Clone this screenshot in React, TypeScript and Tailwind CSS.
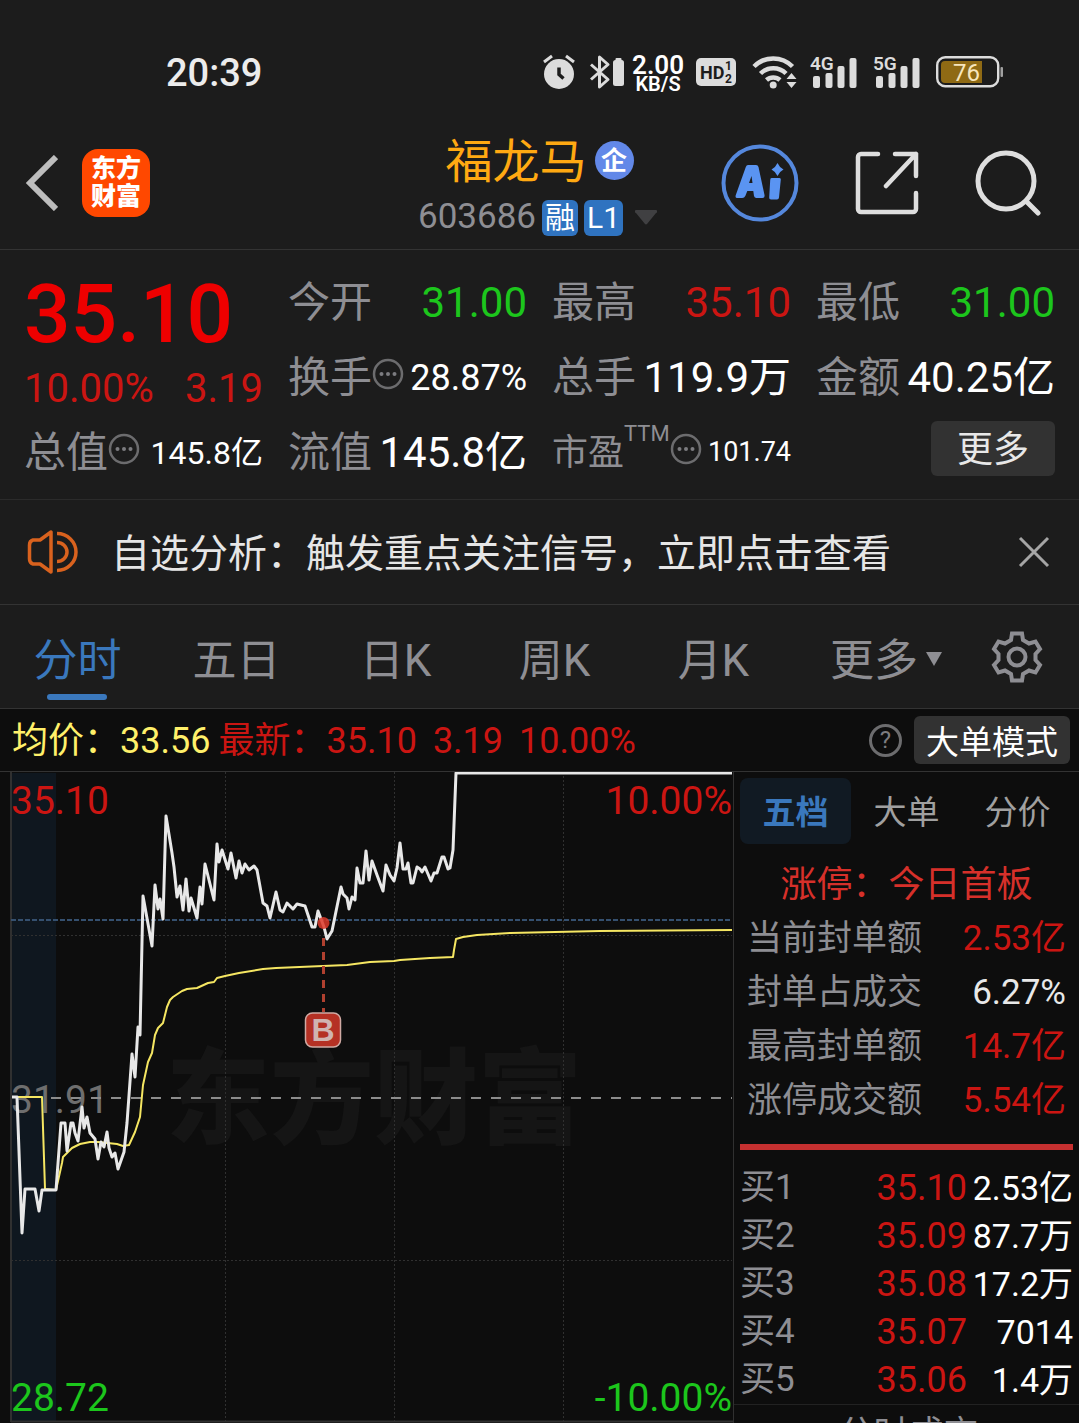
import type { ReactNode } from "react";

type QuoteCell = {
  label: string;
  value: string;
  valueClass: string;
  hint?: boolean;
};

const gray = "text-[#8e8e93]";

const quoteRows: QuoteCell[][] = [
  [
    { label: "今开", value: "31.00", valueClass: "text-[42px] text-[#1cc61c]" },
    { label: "最高", value: "35.10", valueClass: "text-[42px] text-[#cb1512]" },
    { label: "最低", value: "31.00", valueClass: "text-[42px] text-[#1cc61c]" },
  ],
  [
    { label: "换手", value: "28.87%", valueClass: "text-[36px] text-white", hint: true },
    { label: "总手", value: "119.9万", valueClass: "text-[42px] text-white" },
    { label: "金额", value: "40.25亿", valueClass: "text-[42px] text-white" },
  ],
];

const periods = ["分时", "五日", "日K", "周K", "月K"];

const limitStats = [
  { label: "当前封单额", value: "2.53亿", color: "text-[#cb1512]" },
  { label: "封单占成交", value: "6.27%", color: "text-[#e8e8e8]" },
  { label: "最高封单额", value: "14.7亿", color: "text-[#cb1512]" },
  { label: "涨停成交额", value: "5.54亿", color: "text-[#cb1512]" },
];

const bids = [
  { level: "买1", price: "35.10", volume: "2.53亿" },
  { level: "买2", price: "35.09", volume: "87.7万" },
  { level: "买3", price: "35.08", volume: "17.2万" },
  { level: "买4", price: "35.07", volume: "7014" },
  { level: "买5", price: "35.06", volume: "1.4万" },
];

const pricePoints =
  "12,325 17,325 22,461 25,417 35,417 39,439 42,418 56,418 61,351 65,351 67,379 71,351 73,351 75,361 78,369 82,335 84,356 87,345 90,361 95,367 98,387 101,370 104,375 107,360 109,376 112,385 115,381 118,397 124,380 127,351 132,282 135,305 138,255 140,263 143,124 152,174 155,113 158,137 160,127 163,147 166,44 172,81 174,95 177,125 180,114 183,138 186,107 189,139 191,126 197,146 200,115 202,132 205,92 214,128 217,72 219,90 222,78 228,97 231,81 236,106 239,89 242,101 245,92 249,98 254,94 257,98 263,131 267,134 270,146 276,120 280,138 283,140 287,131 293,137 297,132 305,134 312,155 315,155 318,139 324,155 327,167 332,159 341,115 343,122 347,126 349,137 352,125 355,128 357,96 360,111 363,111 366,79 369,108 372,89 377,103 383,119 386,93 390,103 394,109 397,96 400,71 403,97 406,97 408,91 411,111 413,111 417,95 420,97 422,100 425,95 431,109 434,101 437,101 442,85 444,85 448,97 450,96 453,78 456,1 732,1";

const averagePoints =
  "17,325 42,325 45,417 56,418 62,391 63,385 72,376 80,372 90,370 98,370 117,372 123,374 129,373 135,360 140,345 143,313 148,290 152,281 155,263 158,256 163,251 167,235 170,228 173,225 182,219 187,217 197,216 208,211 214,210 217,206 225,204 239,201 263,197 276,196 323,194 347,193 370,190 394,189 400,188 430,186 453,185 454,178 456,167 463,165 477,163 510,161 600,159 732,158";

function AlarmIcon() {
  return (
    <svg viewBox="0 0 34 36" className="h-9 w-[34px]" fill="none">
      <circle cx="17" cy="20" r="15" fill="#dcdcdc" />
      <path d="M2 8 10 2M32 8l-8-6" stroke="#dcdcdc" strokeWidth="3" />
      <path d="M17 13.500v7l4.500 4" stroke="#1c1c1c" strokeWidth="3.500" />
    </svg>
  );
}

function BluetoothIcon() {
  return (
    <svg viewBox="0 0 36 36" className="h-9 w-9" fill="none">
      <path d="m3 10.500 17 15-8.500 7.500V3l8.500 7.500-17 15" stroke="#dcdcdc" strokeWidth="3" strokeLinejoin="round" />
      <rect x="25" y="6" width="11" height="26" rx="2.500" fill="#dcdcdc" />
      <rect x="27.500" y="4" width="6" height="3" rx="1" fill="#dcdcdc" />
    </svg>
  );
}

function HdIcon() {
  return (
    <svg viewBox="0 0 40 28" className="h-7 w-10" fontWeight="700" fill="#1c1c1c">
      <rect width="40" height="28" rx="5" fill="#dcdcdc" />
      <text x="4" y="21" fontSize="18">HD</text>
      <text x="29" y="12" fontSize="12">1</text>
      <text x="29" y="25" fontSize="12">2</text>
    </svg>
  );
}

function WifiIcon() {
  return (
    <svg viewBox="0 0 46 36" className="h-9 w-[46px]" fill="none">
      <path d="M2 12.500a27 27 0 0 1 38.500 0M8.500 19.500a18 18 0 0 1 25.500 0M14.500 26a10 10 0 0 1 13.500 0" stroke="#dcdcdc" strokeWidth="4.500" />
      <circle cx="21.200" cy="31" r="3.500" fill="#dcdcdc" />
      <path d="m34.500 25 5-6 5 6zM34.500 28l5 6 5-6z" fill="#dcdcdc" />
    </svg>
  );
}

function SignalIcon({ label }: { label: string }) {
  return (
    <svg viewBox="0 0 47 38" className="mb-1 h-[38px] w-[47px]" fill="#dcdcdc">
      <text x="0" y="19" fontSize="19" fontWeight="600">{label}</text>
      <rect x="3" y="25" width="7" height="12" rx="2" />
      <rect x="15.500" y="22" width="7" height="15" rx="2" />
      <rect x="27.500" y="15" width="7" height="22" rx="2" />
      <rect x="39.500" y="7" width="7" height="30" rx="2" />
    </svg>
  );
}

function BatteryIcon() {
  return (
    <svg viewBox="0 0 67 32" className="h-8 w-[67px]" fill="none">
      <rect x="1.200" y="1.200" width="61" height="29" rx="8" stroke="#dcdcdc" strokeWidth="2.400" />
      <path d="M9 5h37v22H9a4 4 0 0 1-4-4V9a4 4 0 0 1 4-4Z" fill="#8f6a14" />
      <rect x="64.500" y="11" width="2.500" height="10" rx="1" fill="#a0a0a0" />
      <text x="17" y="25" fontSize="24" fill="#f7e6bd">76</text>
    </svg>
  );
}

function StatusBar() {
  return (
    <div className="flex h-[116px] items-center justify-between pt-7 pr-[76px] pl-[166px]">
      <span className="pt-0.5 text-[38px] font-medium text-[#ececec]">20:39</span>
      <div className="flex items-center">
        <AlarmIcon />
        <div className="ml-3">
          <BluetoothIcon />
        </div>
        <div className="ml-2 pt-1 text-center font-semibold text-white">
          <div className="text-[26px] leading-5">2.00</div>
          <div className="text-[20px] leading-[18px]">KB/S</div>
        </div>
        <div className="ml-3">
          <HdIcon />
        </div>
        <div className="ml-4">
          <WifiIcon />
        </div>
        <div className="ml-3">
          <SignalIcon label="4G" />
        </div>
        <div className="ml-4">
          <SignalIcon label="5G" />
        </div>
        <div className="ml-4">
          <BatteryIcon />
        </div>
      </div>
    </div>
  );
}

function Header() {
  return (
    <header className="grid h-[134px] grid-cols-[1fr_auto_1fr] items-center border-b border-[#333333] px-6">
      <div className="flex items-center gap-6">
        <button aria-label="返回">
          <svg viewBox="0 0 34 56" className="h-14 w-[34px]" fill="none" stroke="#bdbdbd" strokeWidth="6">
            <path d="M32 2 6 28l26 26" />
          </svg>
        </button>
        <div className="flex h-[68px] w-[68px] flex-col items-center justify-center rounded-2xl bg-[#ff4800] text-[25px] leading-7 font-black text-white">
          <span>东方</span>
          <span>财富</span>
        </div>
      </div>
      <div className="flex flex-col items-center pt-2">
        <div className="flex items-center gap-2">
          <h1 className="pt-0.5 text-[47px] leading-[60px] text-[#ffa912]">福龙马</h1>
          <span className="flex h-[39px] w-[39px] items-center justify-center rounded-full bg-[#6288e8] text-[26px] leading-none font-bold text-white">
            企
          </span>
        </div>
        <div className="flex h-[52px] items-center gap-1.5 pr-1">
          <span className="text-[35px] text-[#8e8e93]">603686</span>
          <span className="flex h-9 w-9 items-center justify-center rounded-md bg-[#2f73c0] text-[30px] leading-none text-white">融</span>
          <span className="flex h-9 w-[39px] items-center justify-center rounded-md bg-[#2f73c0] text-[30px] leading-none text-white">L1</span>
          <svg viewBox="0 0 22 15" className="ml-1.5 h-[15px] w-[22px]" fill="#404042">
            <path d="M2 0h18a1.500 1.500 0 0 1 1 3l-9 11a1.500 1.500 0 0 1-2 0L1 3a1.500 1.500 0 0 1 1-3Z" />
          </svg>
        </div>
      </div>
      <div className="flex items-center justify-end gap-[56px] pr-3.5">
        <button aria-label="Ai">
          <svg viewBox="0 0 78 78" className="h-[78px] w-[78px]" fill="none">
            <circle cx="39" cy="39" r="36.500" stroke="#5588dd" strokeWidth="4" />
            <path fillRule="evenodd" d="M27 21h8q2 0 2.500 2l6 28q.5 3-2 3h-6q-2 0-2.500-2l-.7-5h-6l-2 5q-1 2-3 2h-5q-2.500 0-1.500-3l10-28q.7-2 2.200-2Zm3.500 11-2.500 7h3.500Z" fill="#5a94f2" />
            <path d="M50.500 34h8q1.500 0 1.300 1.500l-1.800 18q-.2 2-2 2h-6q-2 0-1.800-2l1-17.500q.1-2 1.300-2ZM56.500 19q2 4.500 6 6.500-4 2-6 6.500-2-4.500-6-6.500 4-2 6-6.500Z" fill="#5a94f2" />
          </svg>
        </button>
        <button aria-label="分享">
          <svg viewBox="0 0 64 64" className="h-16 w-16" fill="none" stroke="#dedede" strokeWidth="4.500" strokeLinecap="round" strokeLinejoin="round">
            <path d="M23 3H6a3 3 0 0 0-3 3v52a3 3 0 0 0 3 3h52a3 3 0 0 0 3-3V42M40 3h21v22M61 3 31 35" />
          </svg>
        </button>
        <button aria-label="搜索">
          <svg viewBox="0 0 66 66" className="h-[66px] w-[66px]" fill="none" stroke="#dedede" strokeWidth="5" strokeLinecap="round">
            <circle cx="31" cy="31" r="28" />
            <path d="m51 51 12 12" />
          </svg>
        </button>
      </div>
    </header>
  );
}

function HintIcon() {
  return (
    <svg viewBox="0 0 32 32" className="mb-2 h-8 w-8 shrink-0" fill="none">
      <circle cx="16" cy="16" r="14" stroke="#6c6c6e" strokeWidth="2.500" />
      <g fill="#7c7c80">
        <circle cx="9.500" cy="16" r="2" />
        <circle cx="16" cy="16" r="2" />
        <circle cx="22.500" cy="16" r="2" />
      </g>
    </svg>
  );
}

function Cell({ children }: { children: ReactNode }) {
  return <div className="flex h-[75px] items-center justify-between whitespace-nowrap">{children}</div>;
}

function QuoteValue({ cell }: { cell: QuoteCell }) {
  return (
    <Cell>
      <span className={`flex items-center text-[42px] ${gray}`}>
        {cell.label}
        {cell.hint && <HintIcon />}
      </span>
      <span className={cell.valueClass}>{cell.value}</span>
    </Cell>
  );
}

function QuotePanel() {
  return (
    <section className="grid grid-cols-4 gap-x-[25px] border-b border-[#2b2b2b] px-6 pt-[15px] pb-[9px]">
      <div className="row-span-2">
        <div className="text-[82px] leading-[98px] font-medium text-[#ee0000]">35.10</div>
        <div className="flex justify-between text-[40px] leading-[52px] text-[#cb1512]">
          <span>10.00%</span>
          <span>3.19</span>
        </div>
      </div>
      {quoteRows.flat().map((cell) => (
        <QuoteValue key={cell.label} cell={cell} />
      ))}
      <QuoteValue cell={{ label: "总值", value: "145.8亿", valueClass: "text-[32px] text-white", hint: true }} />
      <QuoteValue cell={{ label: "流值", value: "145.8亿", valueClass: "text-[42px] text-white" }} />
      <Cell>
        <span className={`flex items-center text-[36px] ${gray}`}>
          市盈
          <span className="self-start text-[22px] leading-4">TTM</span>
          <HintIcon />
        </span>
        <span className="text-[27px] text-white">101.74</span>
      </Cell>
      <div className="flex h-[67px] items-center justify-end">
        <button className="h-[55px] w-[124px] rounded-md bg-[#323232] pt-0.5 text-[36px] leading-none text-[#e8e8e8]">更多</button>
      </div>
    </section>
  );
}

function Notice() {
  return (
    <div className="flex h-[105px] items-center border-b border-[#333333] pr-[29px] pl-[27px]">
      <svg viewBox="0 0 52 44" className="h-11 w-[52px]" fill="none" stroke="#d9621e" strokeWidth="3.500" strokeLinejoin="round">
        <path d="M24 2v40L13 34H6q-3.500-1-3.500-5V15q0-4 3.500-5h7Z" />
        <path d="M30 3.500a19 18.500 0 0 1 0 37M30 12.500a10 9.500 0 0 1 0 19" />
      </svg>
      <p className="ml-8 flex-1 pt-1 text-[39px] whitespace-nowrap text-[#e6e6e6]">自选分析：触发重点关注信号，立即点击查看</p>
      <button aria-label="关闭">
        <svg viewBox="0 0 32 32" className="h-8 w-8" stroke="#a5a5a5" strokeWidth="3">
          <path d="m2 2 28 28M30 2 2 30" />
        </svg>
      </button>
    </div>
  );
}

function PeriodTabs() {
  return (
    <nav className={`flex h-[104px] border-b border-[#333333] pr-[34px] text-[44px] ${gray}`}>
      {periods.map((period, i) => (
        <button key={period} className={`flex-[160] pt-2 pr-1 ${i === 0 ? "text-[#3a78bd]" : ""}`}>
          <span className="relative inline-block">
            {period}
            {i === 0 && <span className="absolute -bottom-1.5 left-1/2 h-1.5 w-[60px] -translate-x-1/2 rounded-full bg-[#3a78bd]" />}
          </span>
        </button>
      ))}
      <button className="flex flex-[188] items-center justify-center gap-2 pt-2 pr-3">
        更多
        <svg viewBox="0 0 16 14" className="mb-1 h-3.5 w-4" fill="#8e8e93">
          <path d="M0 0h16L8 14Z" />
        </svg>
      </button>
      <button aria-label="设置" className="flex w-[56px] items-center justify-center">
        <svg viewBox="0 0 52 52" className="h-[52px] w-[52px]" fill="none" stroke="#8e8e93" strokeWidth="4">
          <path d="M21 2.500h10l1 6.500 6 3.500 6.500-2 4.500 7.500-4.500 5v6l4.500 5-4.500 7.500-6.500-2-6 3.500-1 6.500H21l-1-6.500-6-3.500-6.500 2L3 34l4.500-5v-6L3 18l4.500-7.500 6.500 2L20 9Z" />
          <circle cx="26" cy="26" r="8.500" />
        </svg>
      </button>
    </nav>
  );
}

function ChartInfo() {
  return (
    <div className="flex h-[63px] items-center border-b border-[#333333] pr-[9px] pl-3 text-[36px] whitespace-nowrap text-[#cb1512]">
      <span className="pt-0.5 text-[#fff06a]">均价：33.56</span>
      <span className="ml-2 pt-0.5">最新：35.10</span>
      <span className="ml-4 pt-0.5">3.19</span>
      <span className="ml-4 pt-0.5">10.00%</span>
      <button aria-label="帮助" className="ml-auto flex h-[33px] w-[33px] items-center justify-center rounded-full border-[3px] border-[#6c6c6e] text-[24px] leading-none text-[#7c7c80]">
        ?
      </button>
      <button className="ml-3 h-12 w-[156px] rounded-md bg-[#323232] pt-1 text-[33px] leading-none text-white">大单模式</button>
    </div>
  );
}

function MinuteChart() {
  return (
    <svg viewBox="0 0 733 651" className="h-auto w-full" fill="none" fontSize="39">
      <rect x="12" y="1" width="44" height="648" fill="#0f171f" />
      <text x="166" y="364" fontSize="104" fontWeight="900" fill="#151515">东方财富</text>
      <path d="M225.500 0v649M394.500 0v649M563.500 0v649M11 163.500h721M11 488.500h721" stroke="#303030" strokeDasharray="2 2" />
      <path d="M11 0v650M11 649.500h722" stroke="#303030" strokeWidth="2" />
      <path d="M11 148h721" stroke="#35506f" strokeWidth="2" strokeDasharray="5 2" />
      <text x="11" y="341" fill="#6e6e6e">31.91</text>
      <path d="M51 326h681" stroke="#8c8c8c" strokeWidth="2" strokeDasharray="10 10" />
      <polyline points={averagePoints} stroke="#f5e662" strokeWidth="2" strokeLinejoin="round" />
      <polyline points={pricePoints} stroke="#e8e8e8" strokeWidth="3" strokeLinejoin="round" />
      <text x="11" y="42" fill="#cb1512">35.10</text>
      <text x="732" y="42" textAnchor="end" fill="#cb1512">10.00%</text>
      <text x="11" y="639" fill="#1cc61c">28.72</text>
      <text x="732" y="639" textAnchor="end" fill="#1cc61c">-10.00%</text>
      <circle cx="323.500" cy="151" r="6" fill="#dd3a2a" fillOpacity="0.85" />
      <path d="M323.500 166v74" stroke="#b0402f" strokeWidth="3" strokeDasharray="8 6" />
      <rect x="305.500" y="241" width="35" height="34" rx="7" fill="#b53124" stroke="#d0aaa4" strokeWidth="1.500" />
      <text x="323" y="269" textAnchor="middle" fontSize="32" fontWeight="700" fill="#d0b4b0" fontFamily="Liberation Sans">B</text>
    </svg>
  );
}

function OrderPanel() {
  return (
    <aside className="border-l border-[#303030]">
      <div className="px-1.5 pt-1.5">
        <div className="grid grid-cols-3 text-[33px] text-[#a0a0a0]">
          <button className="h-[66px] rounded-lg bg-[#111a23] pt-1 font-bold text-[#3a78bd]">五档</button>
          <button className="pt-1">大单</button>
          <button className="pt-1">分价</button>
        </div>
        <div className="mt-3.5 text-center text-[36px] leading-[54px] text-[#d6302a]">涨停：今日首板</div>
        <dl className="px-[7px] text-[35px] leading-[54px] whitespace-nowrap">
          {limitStats.map((row) => (
            <div key={row.label} className="flex justify-between">
              <dt className={gray}>{row.label}</dt>
              <dd className={row.color}>{row.value}</dd>
            </div>
          ))}
        </dl>
        <div className="mt-4 h-1.5 bg-[#c63030]" />
        <table className="mt-3.5 w-full text-[35px] leading-[48px] whitespace-nowrap">
          <tbody>
            {bids.map((bid) => (
              <tr key={bid.level}>
                <td className={`p-0 ${gray}`}>{bid.level}</td>
                <td className="p-0 text-right text-[36px] text-[#cb1512]">{bid.price}</td>
                <td className="w-[106px] p-0 text-right text-[34px] text-white">{bid.volume}</td>
              </tr>
            ))}
          </tbody>
        </table>
      </div>
      <a href="#trades" className={`flex items-center justify-center gap-4 border-t border-[#222222] pt-1 pl-8 text-[35px] ${gray}`}>
        分时成交
        <svg viewBox="0 0 12 22" className="mb-1 h-[22px] w-3" fill="none" stroke="#8e8e93" strokeWidth="3">
          <path d="m2 2 8 9-8 9" />
        </svg>
      </a>
    </aside>
  );
}

export default function App() {
  return (
    <div className="h-screen overflow-hidden bg-[#1c1c1c] font-['Roboto','Noto_Sans_CJK_SC',sans-serif]">
      <StatusBar />
      <Header />
      <QuotePanel />
      <Notice />
      <PeriodTabs />
      <main className="bg-[#0d0d0d]">
        <ChartInfo />
        <div className="grid grid-cols-[733fr_346fr]">
          <MinuteChart />
          <OrderPanel />
        </div>
      </main>
    </div>
  );
}
